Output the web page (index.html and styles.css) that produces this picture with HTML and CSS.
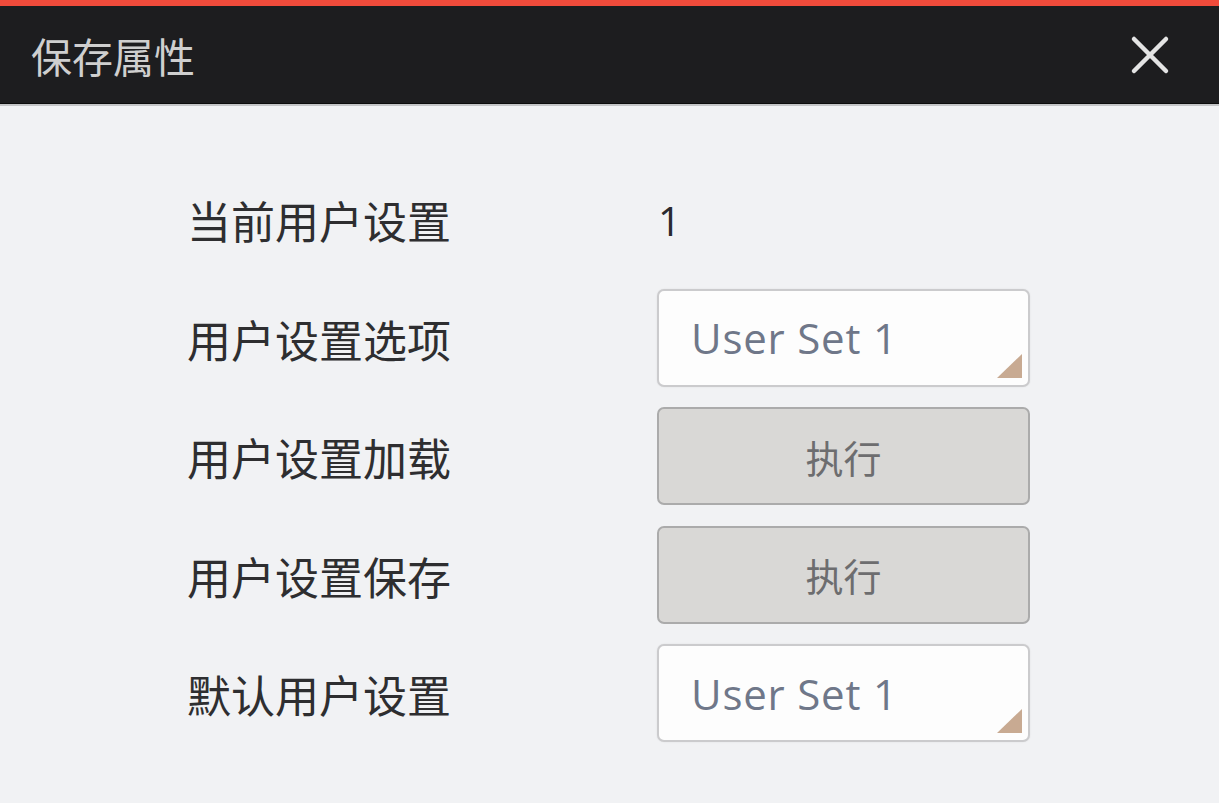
FILE: index.html
```html
<!DOCTYPE html>
<html lang="zh-CN">
<head>
<meta charset="utf-8">
<title>保存属性</title>
<link rel="stylesheet" href="styles.css">
</head>
<body>
<div class="dialog">
  <div class="accent"></div>
  <div class="titlebar">
    <span class="title">保存属性</span>
    <svg class="close" width="40" height="40" viewBox="0 0 40 40" aria-label="关闭">
      <path d="M4 4 L36 36 M36 4 L4 36" stroke="#e4e4e4" stroke-width="4.5" stroke-linecap="round"/>
    </svg>
  </div>
  <div class="divider"></div>
  <div class="content">
    <div class="form">
      <div class="label">当前用户设置</div>
      <div class="value">1</div>

      <div class="label">用户设置选项</div>
      <div class="select"><span>User Set 1</span><i class="corner"></i></div>

      <div class="label">用户设置加载</div>
      <div class="btn">执行</div>

      <div class="label">用户设置保存</div>
      <div class="btn">执行</div>

      <div class="label">默认用户设置</div>
      <div class="select"><span>User Set 1</span><i class="corner"></i></div>
    </div>
  </div>
</div>
</body>
</html>
```

FILE: styles.css
```css
html, body {
  margin: 0;
  padding: 0;
  width: 1219px;
  height: 803px;
  overflow: hidden;
  background: #f1f2f4;
}

.dialog {
  width: 1219px;
  height: 803px;
  display: flex;
  flex-direction: column;
  font-family: "Noto Sans CJK SC", "Noto Sans", sans-serif;
}

.accent {
  height: 6px;
  background: #f04b3b;
}

.titlebar {
  height: 97px;
  background: #1d1d1f;
  display: flex;
  align-items: center;
  justify-content: space-between;
  padding: 0 49px 0 31px;
}

.title {
  color: #cfcfcf;
  font-size: 41px;
  line-height: 1;
  margin-top: 1px;
}

.close {
  display: block;
}

.divider {
  height: 1px;
  background: #0c0c0c;
  border-bottom: 2px solid #c4c5c7;
}

.content {
  flex: 1;
  padding: 64px 0 0 187px;
}

.form {
  display: grid;
  grid-template-columns: 470px 373px;
  grid-auto-rows: 98px;
  row-gap: 20.5px;
  align-items: center;
}

.label {
  font-size: 44px;
  color: #2e2e30;
  line-height: 1;
  padding-top: 2px;
}

.value {
  font-family: "Open Sans", "Noto Sans", sans-serif;
  font-size: 40px;
  color: #2a2a2e;
  padding-left: 1px;
  padding-top: 2px;
}

.select {
  position: relative;
  height: 98px;
  box-sizing: border-box;
  border: 2px solid #cbcbcd;
  border-radius: 7px;
  background: #fdfdfd;
  box-shadow: 0 0 2px rgba(0,0,0,0.08);
  display: flex;
  align-items: center;
  padding-left: 32px;
}

.select span {
  font-family: "Open Sans", "Noto Sans", sans-serif;
  font-size: 42px;
  color: #6f7789;
  letter-spacing: 0.8px;
}

.corner {
  position: absolute;
  right: 6px;
  bottom: 7px;
  width: 0;
  height: 0;
  border-left: 25px solid transparent;
  border-bottom: 24px solid #c8aa92;
}

.btn {
  height: 98px;
  box-sizing: border-box;
  border: 2px solid #ababab;
  border-radius: 7px;
  background: #d9d8d6;
  display: flex;
  align-items: center;
  justify-content: center;
  font-size: 38px;
  color: #6d6d6f;
}
```
